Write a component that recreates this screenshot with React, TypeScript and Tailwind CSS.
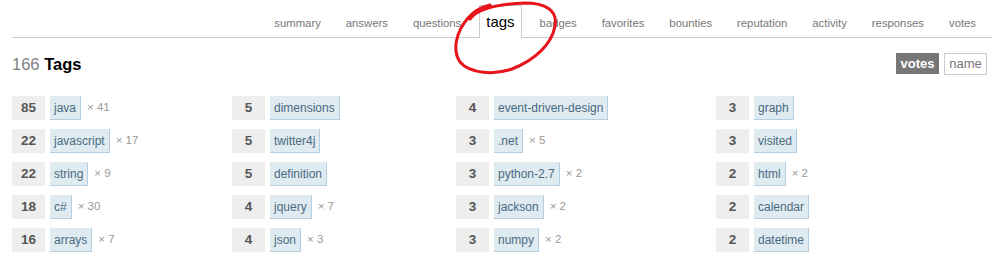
import React from "react";

const tabs = ["summary", "answers", "questions", "tags", "badges", "favorites", "bounties", "reputation", "activity", "responses", "votes"];

type Cell = { score: number; tag: string; mult?: number };
const cols: Cell[][] = [
  [
    { score: 85, tag: "java", mult: 41 },
    { score: 22, tag: "javascript", mult: 17 },
    { score: 22, tag: "string", mult: 9 },
    { score: 18, tag: "c#", mult: 30 },
    { score: 16, tag: "arrays", mult: 7 },
  ],
  [
    { score: 5, tag: "dimensions" },
    { score: 5, tag: "twitter4j" },
    { score: 5, tag: "definition" },
    { score: 4, tag: "jquery", mult: 7 },
    { score: 4, tag: "json", mult: 3 },
  ],
  [
    { score: 4, tag: "event-driven-design" },
    { score: 3, tag: ".net", mult: 5 },
    { score: 3, tag: "python-2.7", mult: 2 },
    { score: 3, tag: "jackson", mult: 2 },
    { score: 3, tag: "numpy", mult: 2 },
  ],
  [
    { score: 3, tag: "graph" },
    { score: 3, tag: "visited" },
    { score: 2, tag: "html", mult: 2 },
    { score: 2, tag: "calendar" },
    { score: 2, tag: "datetime" },
  ],
];

function TagCell({ c }: { c: Cell }) {
  return (
    <div className="flex items-center h-[24px]">
      <div className="w-[33px] h-[24px] bg-[#eeeeee] flex items-center justify-center text-[13.5px] font-bold text-[#555555]">
        {c.score}
      </div>
      <span className="ml-[5px] h-[24px] flex items-center px-[4px] bg-[#e0eaf1] border-r border-b border-[#b3cee1] text-[12px] text-[#4a6a82]">
        {c.tag}
      </span>
      {c.mult !== undefined && (
        <span className="ml-[6px] text-[11.5px] text-[#999999]">× {c.mult}</span>
      )}
    </div>
  );
}

export default function App() {
  return (
    <div className="relative w-[1006px] h-[260px] bg-white overflow-hidden" style={{ fontFamily: '"Liberation Sans", Arial, sans-serif' }}>
      <div className="ml-[12px] mr-[14px] h-[38px] border-b border-[#cccccc] flex items-end justify-end pr-[9px]">
        <div className="flex items-end gap-[11px]">
          {tabs.map((t) =>
            t === "tags" ? (
              <div key={t} className="h-[33px] -mb-px px-[6px] bg-white border border-b-0 border-[#cccccc] text-[15px] text-black flex items-start pt-[8px] leading-[15px]">
                {t}
              </div>
            ) : (
              <div key={t} className="px-[7px] pb-[7px] text-[11.3px] leading-[14px] text-[#777777]">
                {t}
              </div>
            )
          )}
        </div>
      </div>

      <div className="flex items-center justify-between ml-[12px] mr-[19px] mt-[15px] h-[21px]">
        <div className="text-[16.5px] leading-[20px] pt-[1px]">
          <span className="text-[#808080]">166</span> <span className="font-bold text-black">Tags</span>
        </div>
        <div className="flex items-center gap-[5px]">
          <span className="w-[43px] h-[21px] bg-[#777777] text-white font-bold text-[13px] flex items-center justify-center">votes</span>
          <span className="w-[43px] h-[22px] border border-[#cccccc] text-[#777777] text-[13px] flex items-center justify-center">name</span>
        </div>
      </div>

      <div className="ml-[12px] mt-[22px] grid grid-cols-[220px_224px_260px_1fr]">
        {cols.map((col, i) => (
          <div key={i} className="flex flex-col gap-[9px]">
            {col.map((c) => (
              <TagCell key={c.tag} c={c} />
            ))}
          </div>
        ))}
      </div>

      <svg className="absolute left-0 top-0 pointer-events-none" width="1006" height="260" viewBox="0 0 1006 260">
        <path
          d="M 470 19 C 478 8, 500 4, 525 3 C 545 3, 558 10, 555 26 C 552 44, 535 60, 512 69 C 495 75, 470 74, 460 62 C 452 50, 456 32, 468 18 C 474 11, 482 7, 490 5"
          fill="none"
          stroke="#e8141c"
          strokeWidth="3"
          strokeLinecap="round"
          strokeLinejoin="round"
        />
      </svg>
    </div>
  );
}
